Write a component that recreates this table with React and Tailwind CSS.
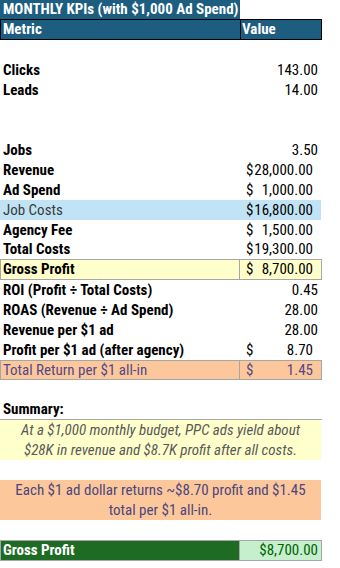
import React from "react";

function Acct({ v }) {
  return (
    <div className="flex h-full items-center justify-between pl-[6px] pr-[8px]">
      <span>$</span>
      <span>{v}</span>
    </div>
  );
}

function Row({ label, value, acct, bold = true, rowCls = "", labelCls = "" }) {
  return (
    <div className={`flex h-5 ${rowCls}`}>
      <div className={`w-[240px] flex items-center pl-[3px] whitespace-nowrap ${bold ? "font-bold" : ""} ${labelCls}`}>
        {label}
      </div>
      <div className="w-[81px]">
        {acct ? (
          <Acct v={value} />
        ) : (
          <div className="flex h-full items-center justify-end pr-[3px]">{value}</div>
        )}
      </div>
    </div>
  );
}

function Blank() {
  return <div className="h-5" />;
}

export default function App() {
  return (
    <div className="w-[340px] h-[568px] bg-white text-black text-[15px] overflow-hidden font-['Roboto',sans-serif] [font-stretch:condensed]">
      <div className="flex h-[19px]">
        <div className="w-[240px] bg-[#1d5d80] text-white font-bold flex items-center pl-[3px] whitespace-nowrap">
          MONTHLY KPIs (with $1,000 Ad Spend)
        </div>
      </div>
      <div className="flex h-[21px] w-[322px] border border-black bg-[#1d5d80] text-white font-bold">
        <div className="w-[240px] border-r border-black flex items-center pl-[2px]">Metric</div>
        <div className="flex-1 flex items-center pl-[1px]">Value</div>
      </div>
      <Blank />
      <Row label="Clicks" value="143.00" />
      <Row label="Leads" value="14.00" />
      <Blank />
      <Blank />
      <Row label="Jobs" value="3.50" />
      <Row label="Revenue" value="28,000.00" acct />
      <Row label="Ad Spend" value="1,000.00" acct />
      <Row label="Job Costs" value="16,800.00" acct bold={false} rowCls="bg-[#c0e4f5] w-[321px]" labelCls="text-[#3a3a3a]" />
      <Row label="Agency Fee" value="1,500.00" acct />
      <Row label="Total Costs" value="19,300.00" acct rowCls="border-b border-[#a6a6a6] w-[322px]" />
      <div className="flex h-5 w-[322px] bg-[#ffffcc] border-x border-b border-[#a6a6a6]">
        <div className="w-[239px] border-r border-[#a6a6a6] flex items-center pl-[2px] font-bold">Gross Profit</div>
        <div className="flex-1">
          <Acct v="8,700.00" />
        </div>
      </div>
      <Row label="ROI (Profit ÷ Total Costs)" value="0.45" />
      <Row label="ROAS (Revenue ÷ Ad Spend)" value="28.00" />
      <Row label="Revenue per $1 ad" value="28.00" />
      <Row label="Profit per $1 ad (after agency)" value="8.70" acct />
      <div className="flex h-5 w-[322px] bg-[#fcc89b] border border-[#a6a6a6] text-[#54478a]">
        <div className="w-[239px] border-r border-[#a6a6a6] flex items-center pl-[2px]">Total Return per $1 all-in</div>
        <div className="flex-1">
          <Acct v="1.45" />
        </div>
      </div>
      <Blank />
      <div className="h-5 w-[322px] border-b border-[#a6a6a6] flex items-center pl-[3px] font-bold">Summary:</div>
      <div className="h-10 w-[321px] bg-[#ffffcc] flex items-center justify-center text-center italic text-[#595959] leading-5">
        <p>
          At a $1,000 monthly budget, PPC ads yield about
          <br />
          $28K in revenue and $8.7K profit after all costs.
        </p>
      </div>
      <Blank />
      <div className="h-10 w-[321px] bg-[#fcc89b] flex items-center justify-center text-center text-[#4b4580] leading-5">
        <p>
          Each $1 ad dollar returns ~$8.70 profit and $1.45
          <br />
          total per $1 all-in.
        </p>
      </div>
      <Blank />
      <div className="flex h-[21px] w-[322px] border border-[#a6a6a6]">
        <div className="w-[239px] bg-[#1e6b24] text-white font-bold flex items-center pl-[2px] border-r border-[#a6a6a6]">
          Gross Profit
        </div>
        <div className="flex-1 bg-[#c6efce] text-[#006100] flex items-center justify-end pr-[3px]">$8,700.00</div>
      </div>
    </div>
  );
}
